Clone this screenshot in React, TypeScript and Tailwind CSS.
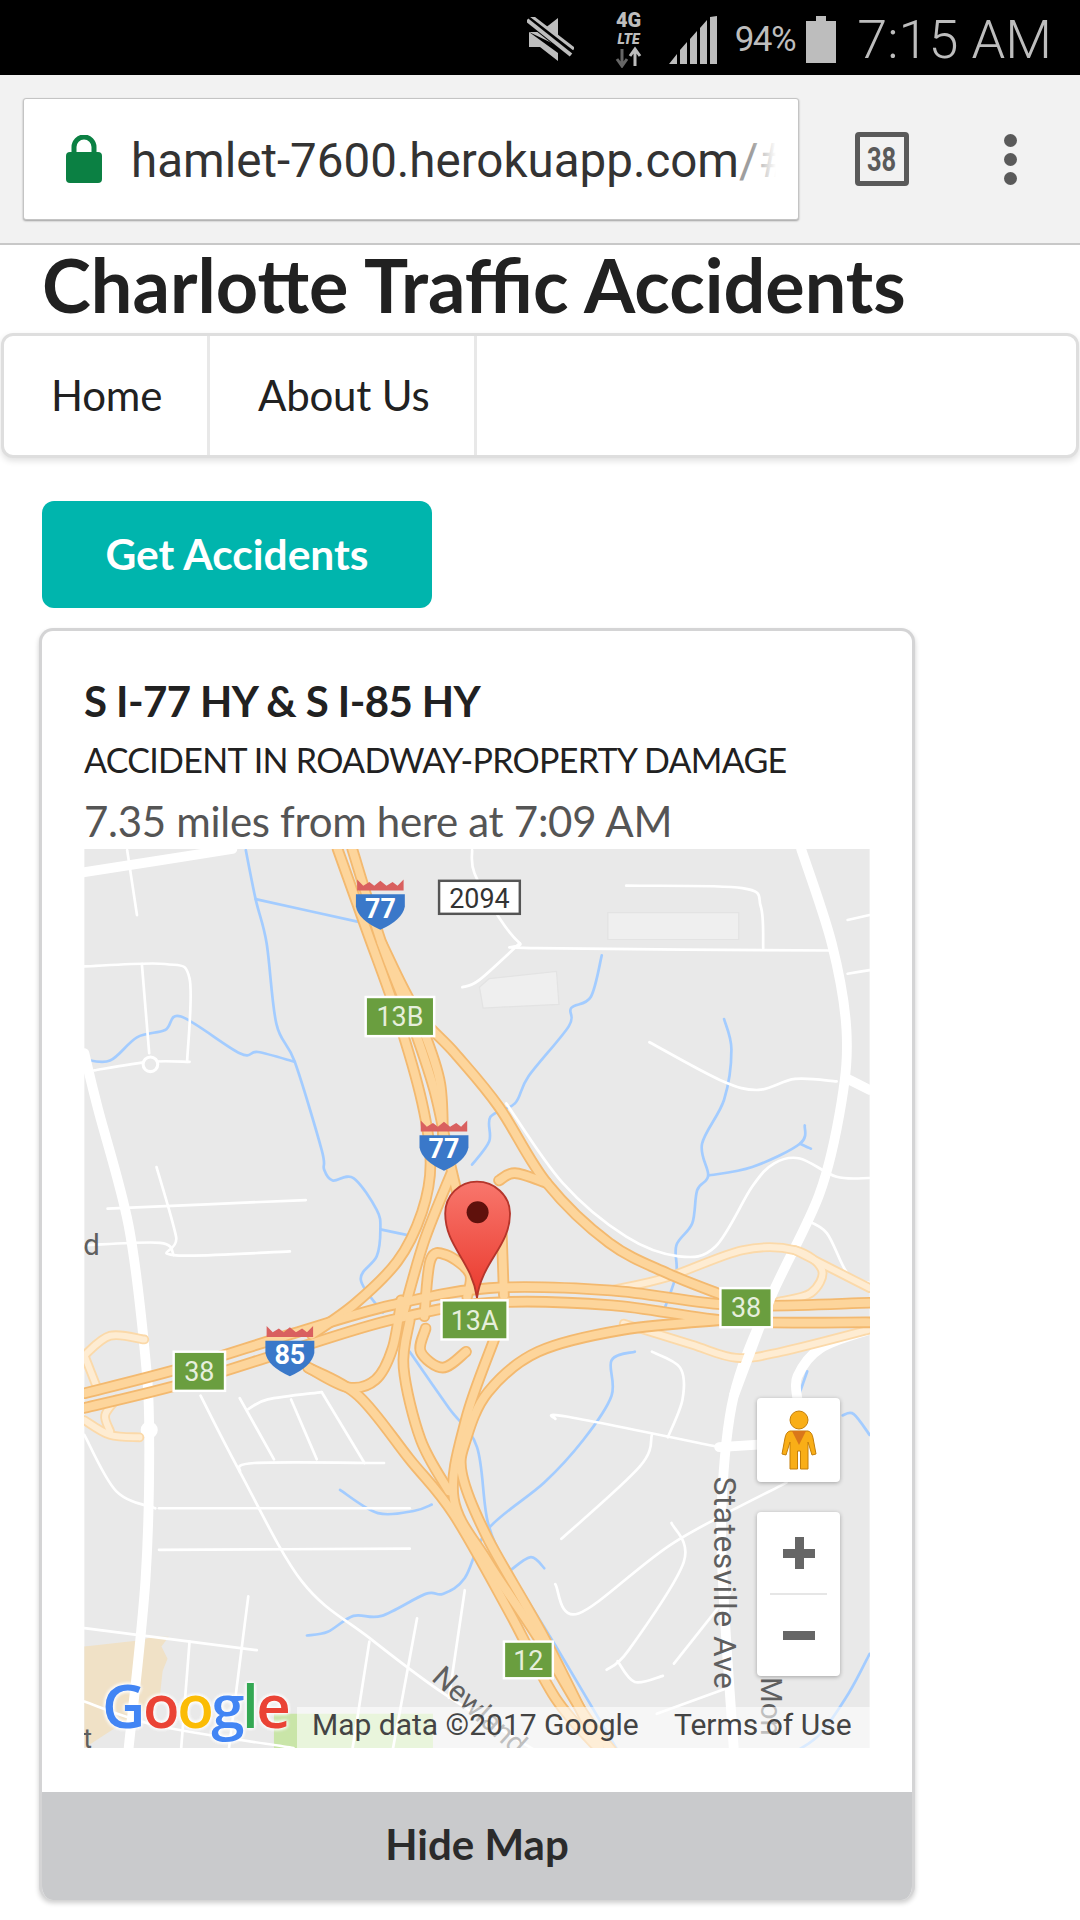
import React from 'react';

type Pt = [number, number];

// catmull-rom through the points, reads closer to the tile curves than polylines
function smooth(pts: Pt[]) {
    let d = `M${pts[0][0]},${pts[0][1]}`;
    for (let i = 0; i < pts.length - 1; i++) {
        const p0 = pts[i - 1] || pts[i];
        const p1 = pts[i];
        const p2 = pts[i + 1];
        const p3 = pts[i + 2] || p2;
        const c1x = p1[0] + (p2[0] - p0[0]) / 6;
        const c1y = p1[1] + (p2[1] - p0[1]) / 6;
        const c2x = p2[0] - (p3[0] - p1[0]) / 6;
        const c2y = p2[1] - (p3[1] - p1[1]) / 6;
        d += ` C${c1x.toFixed(1)},${c1y.toFixed(1)} ${c2x.toFixed(1)},${c2y.toFixed(1)} ${p2[0]},${p2[1]}`;
    }
    return d;
}

const water: Pt[][] = [
    [[201, 694], [209, 734], [218, 770], [226, 836], [241, 867], [263, 939], [265, 955], [272, 964], [289, 962], [308, 988], [311, 1004], [308, 1026], [295, 1045], [313, 1072]],
    [[209, 734], [295, 753]],
    [[69, 865], [90, 866], [112, 847], [135, 841], [148, 830], [196, 860], [211, 859], [241, 867]],
    [[311, 1004], [340, 1010]],
    [[492, 780], [483, 814], [467, 823], [465, 838], [432, 879], [421, 901], [401, 912], [400, 932], [386, 951]],
    [[592, 832], [598, 857], [592, 898], [574, 934], [579, 960], [570, 972], [566, 999], [553, 1017], [553, 1040], [544, 1067]],
    [[579, 960], [615, 953], [654, 934], [658, 919]],
    [[654, 934], [663, 938]],
    [[335, 1104], [367, 1150], [390, 1182], [399, 1244], [417, 1283], [454, 1344], [505, 1430]],
    [[278, 1217], [309, 1236], [339, 1234], [353, 1229]],
    [[519, 1104], [500, 1111], [500, 1140], [477, 1176], [445, 1211], [399, 1249], [380, 1289], [362, 1302], [348, 1302], [312, 1320], [289, 1320], [268, 1333], [251, 1336]],
    [[417, 1283], [434, 1272], [445, 1281]],
    [[652, 1143], [660, 1120]],
    [[689, 1156], [698, 1155], [711, 1172]],
    [[711, 1351], [694, 1383], [671, 1416], [652, 1430]],
];

const minorRoads: Pt[][] = [
    [[386, 694], [388, 713], [408, 749], [425, 770], [438, 774], [680, 776]],
    [[512, 723], [607, 725], [622, 740], [624, 774]],
    [[425, 770], [392, 800], [378, 806]],
    [[531, 851], [589, 882], [620, 890], [650, 881], [684, 883]],
    [[693, 795], [711, 792]],
    [[693, 751], [711, 747]],
    [[69, 789], [135, 787], [155, 799], [153, 867]],
    [[116, 787], [122, 860]],
    [[77, 874], [122, 867], [155, 867]],
    [[104, 694], [112, 747]],
    [[414, 901], [460, 966], [512, 1010], [555, 1026], [585, 1018], [615, 969], [633, 950], [654, 946], [684, 961], [711, 962]],
    [[658, 996], [676, 1007], [693, 1040], [711, 1048]],
    [[88, 987], [250, 980]],
    [[128, 953], [144, 1010], [142, 1025], [237, 1022]],
    [[69, 1017], [131, 1015], [142, 1025]],
    [[164, 1140], [196, 1202], [247, 1292], [302, 1338], [362, 1383], [436, 1429]],
    [[130, 1232], [335, 1232]],
    [[130, 1266], [335, 1265]],
    [[69, 1172], [95, 1218], [127, 1232]],
    [[196, 1202], [208, 1195], [314, 1195]],
    [[196, 1142], [224, 1192]],
    [[238, 1143], [259, 1192]],
    [[263, 1137], [298, 1195]],
    [[203, 1151], [219, 1143], [263, 1137]],
    [[69, 1330], [210, 1348]],
    [[203, 1304], [187, 1430]],
    [[155, 1341], [148, 1430]],
    [[341, 1322], [321, 1430]],
    [[302, 1341], [288, 1430]],
    [[380, 1299], [367, 1387]],
    [[454, 1159], [463, 1157], [588, 1182]],
    [[533, 1172], [523, 1198], [459, 1257]],
    [[533, 1104], [556, 1117], [558, 1143], [546, 1174]],
    [[643, 1211], [551, 1260], [473, 1318], [454, 1294]],
    [[549, 1244], [559, 1276], [514, 1348], [496, 1364]],
    [[505, 1357], [519, 1374], [542, 1369]],
    [[597, 1301], [551, 1359]],
    [[537, 1400], [592, 1380]],
    [[69, 1390], [130, 1410], [240, 1428]],
];

const majorRoads: Pt[][] = [
    [[69, 860], [80, 905], [105, 1000], [118, 1100], [122, 1170], [119, 1290], [105, 1430]],
    [[655, 693], [680, 770], [692, 840], [688, 900], [670, 975], [630, 1060], [600, 1140], [590, 1230], [592, 1310], [600, 1430]],
    [[69, 712], [190, 693]],
    [[693, 881], [711, 890]],
    [[588, 1182], [620, 1180]],
    [[711, 1086], [671, 1101], [652, 1124], [652, 1143]],
];

const highways: Pt[][] = [
    [[276, 693], [300, 760], [325, 830], [345, 900], [352, 950], [345, 990], [325, 1030], [290, 1065], [255, 1090]],
    [[288, 693], [312, 770], [335, 830], [355, 890], [368, 950], [380, 1000]],
    [[369, 958], [347, 1013], [330, 1072]],
    [[342, 830], [360, 885], [362, 950]],
    [[312, 770], [340, 825], [372, 860], [408, 904], [447, 966], [498, 1015], [546, 1040], [594, 1059]],
    [[69, 1138], [150, 1117], [240, 1089], [320, 1066], [400, 1052], [500, 1054], [600, 1066], [711, 1064]],
    [[69, 1150], [150, 1130], [240, 1102], [320, 1078], [400, 1064], [500, 1066], [600, 1079], [711, 1080]],
    [[252, 1117], [293, 1140], [335, 1192], [371, 1237], [417, 1318], [454, 1387], [491, 1430]],
    [[404, 1094], [381, 1159], [371, 1224], [399, 1276], [440, 1338], [477, 1400], [500, 1430]],
    [[592, 1078], [510, 1086], [440, 1104], [399, 1137], [381, 1176], [378, 1205], [399, 1257], [445, 1338], [490, 1428]],
    [[348, 1085], [344, 1104], [362, 1117], [381, 1104]],
    [[347, 1075], [352, 1029], [365, 1025], [384, 1040], [382, 1059]],
    [[328, 1062], [321, 1101], [307, 1127], [284, 1133], [252, 1117]],
    [[335, 1078], [330, 1117], [344, 1176], [367, 1218]],
    [[408, 964], [421, 958], [447, 966]],
    [[410, 1000], [412, 1058]],
];

const ramps: Pt[][] = [
    [[503, 1053], [546, 1043], [607, 1021], [650, 1021], [672, 1037], [663, 1056], [637, 1063]],
    [[650, 1021], [711, 1052]],
    [[510, 1081], [565, 1098], [602, 1109], [639, 1104], [714, 1085]],
    [[69, 1107], [90, 1091], [118, 1094]],
    [[69, 1107], [80, 1135]],
    [[69, 1160], [90, 1172], [114, 1174]],
    [[95, 1143], [86, 1156], [90, 1169]],
];

function Lines({ list, color, w }: { list: Pt[][]; color: string; w: number }) {
    return (
        <g fill="none" stroke={color} strokeWidth={w} strokeLinecap="round" strokeLinejoin="round">
            {list.map((pts, i) => <path key={i} d={smooth(pts)} />)}
        </g>
    );
}

function Shield({ x, y, label }: { x: number; y: number; label: string }) {
    return (
        <g transform={`translate(${x},${y})`}>
            <path d="M-19,-11 L-19,-20 L-14,-15 L-9,-18 L-5,-15 L0,-19 L5,-15 L10,-18 L14,-15 L19,-20 L19,-11 Z" fill="#d9605f" />
            <path d="M-20,-8 L20,-8 L20,2 Q18,13 0,21 Q-18,13 -20,2 Z" fill="#3a78c9" />
            <text x="0" y="11" textAnchor="middle" fill="#fff" fontFamily="Roboto, sans-serif" fontWeight="700" fontSize="22">{label}</text>
        </g>
    );
}

function ExitTag({ x, y, w, h, label }: { x: number; y: number; w: number; h: number; label: string }) {
    return (
        <g>
            <rect x={x - w / 2} y={y - h / 2} width={w} height={h} fill="#6a9e3f" stroke="#fff" strokeWidth="2" />
            <text x={x} y={y + 8} textAnchor="middle" fill="#e6efdc" fontFamily="Roboto, sans-serif" fontSize="22">{label}</text>
        </g>
    );
}

function MapTile() {
    return (
        <svg viewBox="69 693 642 735" className="block w-full h-full">
            <defs>
                <linearGradient id="pinFill" x1="0" y1="0" x2="0" y2="1">
                    <stop offset="0" stopColor="#f8766c" />
                    <stop offset="1" stopColor="#ea3a2e" />
                </linearGradient>
            </defs>
            <rect x="69" y="693" width="642" height="735" fill="#e9e9e9" />
            <path d="M69,1345 L115,1340 L125,1337 L138,1337 L132,1345 L137,1355 L133,1365 L130,1392 L112,1400 L69,1428 Z" fill="#f0e1c6" />
            <path d="M224,1400 L243,1400 L354,1400 L354,1428 L224,1428 Z" fill="#c9e5a8" />
            <path d="M497,745 L604,745 L604,767 L497,767 Z" fill="#efefef" stroke="#e3e3e3" />
            <path d="M392,806 L400,799 L455,793 L457,820 L395,823 Z" fill="#efefef" stroke="#e3e3e3" />
            <Lines list={water} color="#a3ccff" w={2.2} />
            <Lines list={minorRoads} color="#ffffff" w={2.2} />
            <Lines list={majorRoads} color="#ffffff" w={8} />
            <circle cx="123" cy="869" r="6" fill="#e9e9e9" stroke="#fff" strokeWidth="2.5" />
            <circle cx="122" cy="1168" r="7" fill="#fff" />
            <Lines list={ramps} color="#fbd9a9" w={8} />
            <Lines list={ramps} color="#feecd2" w={5} />
            <Lines list={highways} color="#f3b96f" w={9.5} />
            <Lines list={highways} color="#fdd59b" w={6.5} />
            {/* the white road goes over the ramps east of 38 */}
            <path d="M630,1060 L600,1140" stroke="#fff" strokeWidth="8" fill="none" />

            <g fill="#5f5f5f" fontFamily="Roboto, sans-serif">
                <text x="68" y="1025" fontSize="24">d</text>
                <text x="68" y="1428" fontSize="22">t</text>
                <text transform="translate(584,1206) rotate(90)" fontSize="26" letterSpacing="0.4">Statesville Ave</text>
                <text transform="translate(352,1372) rotate(42)" fontSize="24">Newland</text>
                <text transform="translate(622,1370) rotate(90)" fontSize="24">Mon</text>
            </g>

            <rect x="359" y="719" width="66" height="27" fill="#fff" stroke="#555" strokeWidth="2" />
            <text x="392" y="741" textAnchor="middle" fill="#333" fontFamily="Roboto, sans-serif" fontSize="22">2094</text>
            <Shield x={311} y={738} label="77" />
            <Shield x={363} y={935} label="77" />
            <Shield x={237} y={1103} label="85" />
            <ExitTag x={327} y={830} w={56} h={32} label="13B" />
            <ExitTag x={388} y={1078} w={54} h={32} label="13A" />
            <ExitTag x={610} y={1068} w={42} h={32} label="38" />
            <ExitTag x={163} y={1120} w={42} h={32} label="38" />
            <ExitTag x={432} y={1356} w={40} h={30} label="12" />

            <path d="M390,1060 C386,1030 364,1018 364,991 C364,976 376,965 390,965 C404,965 417,976 417,991 C417,1018 394,1030 390,1060 Z" fill="url(#pinFill)" stroke="#b5352b" strokeWidth="1.5" />
            <ellipse cx="390.500" cy="990" rx="9" ry="9" fill="#5f110c" />
        </svg>
    );
}

function GoogleMark() {
    return (
        <div className="absolute left-[18px] bottom-[10px] font-['Open_Sans',sans-serif] text-[60px] leading-[66px] font-semibold tracking-[-2.5px] [text-shadow:0_0_4px_#fff,0_0_4px_#fff,0_0_4px_#fff]">
            <span className="text-[#4285f4]">G</span>
            <span className="text-[#ea4335]">o</span>
            <span className="text-[#fbbc05]">o</span>
            <span className="text-[#4285f4]">g</span>
            <span className="text-[#34a853]">l</span>
            <span className="text-[#ea4335]">e</span>
        </div>
    );
}

function StatusBar() {
    return (
        <div className="h-[75px] bg-black flex items-center justify-end pr-[28px] pt-[4px] text-[#bdbdbd] font-['Roboto',sans-serif]">
            <svg width="47" height="46" viewBox="0 0 47 46" className="mr-[39px]">
                <path d="M2,15 H13 L31,1 V29 Z" fill="#bdbdbd" />
                <path d="M2,15 V30 H13 L31,44 V36 Z" fill="#bdbdbd" />
                <path d="M2,2 L45,36" stroke="#000" strokeWidth="10" />
                <path d="M0,3 L44,38" stroke="#bdbdbd" strokeWidth="4" />
                <path d="M3,-2 L47,32" stroke="#bdbdbd" strokeWidth="3" />
            </svg>
            <svg width="31" height="56" viewBox="0 0 31 56" className="mr-[25px]">
                <text x="15.500" y="15" textAnchor="middle" fill="#bdbdbd" fontFamily="Roboto, sans-serif" fontWeight="900" fontSize="20">4G</text>
                <text x="15.500" y="32" textAnchor="middle" fill="#bdbdbd" fontFamily="Roboto, sans-serif" fontWeight="900" fontStyle="italic" fontSize="14">LTE</text>
                <path d="M9,37 V52 M4,47 L9,54 L14,47" stroke="#666" strokeWidth="3" fill="none" />
                <path d="M22,54 V39 M17,44 L22,37 L27,44" stroke="#bdbdbd" strokeWidth="3" fill="none" />
            </svg>
            <svg width="48" height="48" viewBox="0 0 48 48" className="mr-[18px]">
                <path d="M0,48 L8,38 V48 Z M11,48 V34 L18,26 V48 Z M21,48 V23 L28,15 V48 Z M31,48 V12 L38,4 V48 Z M41,48 V1 L48,0 V48 Z" fill="#bdbdbd" />
            </svg>
            <span className="text-[35px] leading-none tracking-[-1.5px] mr-[11px]">94%</span>
            <svg width="30" height="47" viewBox="0 0 30 47" className="mr-[21px]">
                <path d="M10,0 H20 V5 H30 V47 H0 V5 H10 Z" fill="#bdbdbd" />
            </svg>
            <span className="text-[54px] leading-none font-light">7:15 AM</span>
        </div>
    );
}

function Toolbar() {
    return (
        <div className="h-[170px] bg-[#f2f2f2] border-b-2 border-[#c8c8c8] flex items-start pl-[23px] pt-[23px]">
            <div className="w-[776px] h-[122px] bg-white rounded-[3px] border border-[#c4c4c4] shadow-[0_1px_2px_rgba(0,0,0,0.35)] flex items-center pl-[41px]">
                <svg width="38" height="48" viewBox="0 0 38 48" className="shrink-0">
                    <path d="M9,20 V12 A10,10 0 0 1 29,12 V20" fill="none" stroke="#0b8043" strokeWidth="5" />
                    <rect x="1" y="17" width="36" height="31" rx="4" fill="#0b8043" />
                </svg>
                <div className="relative ml-[28px] mt-[3px] w-[645px] overflow-hidden whitespace-nowrap font-['Roboto',sans-serif] text-[47.5px] leading-[60px] text-[#333]">
                    hamlet-7600.herokuapp.com<span className="text-[#9e9e9e]">/#</span>
                    <div className="absolute right-0 top-0 bottom-0 w-[24px] bg-gradient-to-r from-transparent to-white" />
                </div>
            </div>
            <div className="mt-[34px] ml-[56px] w-[54px] h-[54px] border-[5px] border-[#5a5a5a] rounded-[4px] flex items-center justify-center font-['Roboto',sans-serif] font-bold text-[34px] text-[#5a5a5a]">
                <span className="inline-block scale-x-[0.75]">38</span>
            </div>
            <div className="mt-[36px] ml-[95px] flex flex-col gap-[6px]">
                <div className="w-[13px] h-[13px] rounded-full bg-[#5a5a5a]" />
                <div className="w-[13px] h-[13px] rounded-full bg-[#5a5a5a]" />
                <div className="w-[13px] h-[13px] rounded-full bg-[#5a5a5a]" />
            </div>
        </div>
    );
}

export default function App() {
    return (
        <div className="w-[1080px] h-[1920px] bg-white overflow-hidden font-['Lato',sans-serif] text-[#212121]">
            <StatusBar />
            <Toolbar />

            <h1 className="pl-[42px] h-[88px] text-[73.8px] leading-[80px] font-bold">Charlotte Traffic Accidents</h1>

            <div className="mx-[1px] h-[125px] flex bg-white border-[3px] border-[#dedede] rounded-[12px] shadow-[0_3px_6px_rgba(0,0,0,0.12)] text-[42px] tracking-[-0.2px]">
                <div className="w-[206px] flex items-center pl-[47px] border-r-[3px] border-[#e8e8e8]">Home</div>
                <div className="w-[267px] flex items-center pl-[48px] border-r-[3px] border-[#e8e8e8]">About Us</div>
            </div>

            <button className="block ml-[42px] mt-[43px] w-[390px] h-[107px] pb-[2px] rounded-[12px] bg-[#00b5ad] text-white text-[42.500px] font-bold">
                Get Accidents
            </button>

            <div className="ml-[39px] mt-[20px] w-[876px] h-[1272px] flex flex-col bg-white border-[3px] border-b-0 border-[#d4d4d5] rounded-[14px] shadow-[0_3px_5px_rgba(0,0,0,0.2)] overflow-hidden">
                <div className="flex-1 pl-[42px] pt-[42px]">
                    <div className="text-[42px] leading-[56px] font-bold tracking-[-0.6px]">S I-77 HY &amp; S I-85 HY</div>
                    <div className="text-[34px] leading-[62px] tracking-[-0.7px]">ACCIDENT IN ROADWAY-PROPERTY DAMAGE</div>
                    <div className="text-[42px] leading-[56px] pt-[2px] tracking-[-0.3px] text-[#555]">7.35 miles from here at 7:09 AM</div>
                    <div className="relative w-[786px] h-[899px] overflow-hidden">
                        <MapTile />
                        <GoogleMark />
                        <div className="absolute right-0 bottom-0 left-[213px] h-[41px] pb-[6px] bg-white/60 flex items-center font-['Roboto',sans-serif] text-[30px] text-[#444]">
                            <span className="pl-[15px] w-[360px]">Map data ©2017 Google</span>
                            <span className="pl-[17px]">Terms of Use</span>
                        </div>
                        <div className="absolute right-[30px] top-[549px] w-[83px] h-[84px] bg-white rounded-[4px] shadow-[0_1px_4px_rgba(0,0,0,0.3)] flex items-center justify-center">
                            <svg width="36" height="60" viewBox="0 0 36 60">
                                <circle cx="18" cy="10" r="9" fill="#f9ae17" stroke="#c47f0a" strokeWidth="1" />
                                <path d="M9,21 H27 Q31,22 32,28 L35,44 L31,45 L27,32 V59 H19.500 V41 H16.500 V59 H9 V32 L5,45 L1,44 L4,28 Q5,22 9,21 Z" fill="#f9ae17" stroke="#c47f0a" strokeWidth="1" />
                                <path d="M11,21 H25 L18,35 Z" fill="#d9771a" />
                            </svg>
                        </div>
                        <div className="absolute right-[30px] top-[663px] w-[83px] h-[164px] bg-white rounded-[4px] shadow-[0_1px_4px_rgba(0,0,0,0.3)] flex flex-col items-center">
                            <div className="h-[81px] flex items-center justify-center">
                                <div className="relative w-[32px] h-[32px]">
                                    <div className="absolute left-0 top-[12px] w-[32px] h-[9px] bg-[#666]" />
                                    <div className="absolute left-[12px] top-0 w-[9px] h-[32px] bg-[#666]" />
                                </div>
                            </div>
                            <div className="w-[57px] h-[2px] bg-[#e6e6e6]" />
                            <div className="h-[81px] flex items-center justify-center">
                                <div className="w-[32px] h-[9px] bg-[#666]" />
                            </div>
                        </div>
                    </div>
                </div>
                <button className="h-[108px] shrink-0 pb-[3px] bg-[#c9cacc] text-[42px] font-bold text-[#2b2b2b]">Hide Map</button>
            </div>
        </div>
    );
}
